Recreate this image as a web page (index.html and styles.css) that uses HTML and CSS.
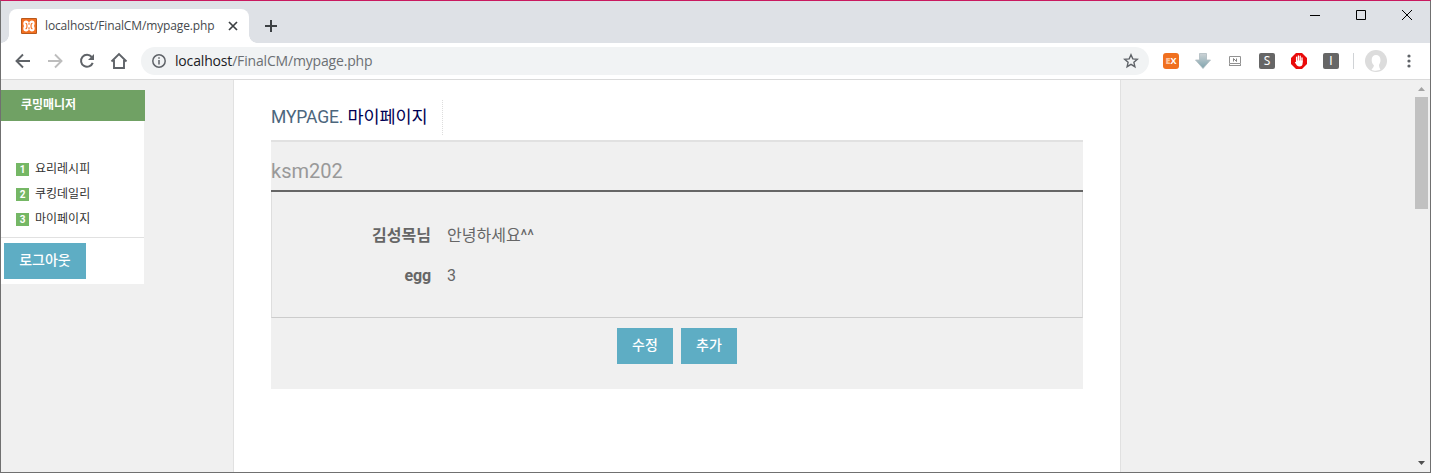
FILE: index.html
```html
<!DOCTYPE html>
<html lang="ko">
<head>
<meta charset="utf-8">
<title>localhost/FinalCM/mypage.php</title>
<link rel="stylesheet" href="styles.css">
</head>
<body>
<div class="window">
  <header class="tabstrip">
    <div class="tab">
      <svg class="favicon" width="16" height="16" viewBox="0 0 16 16"><rect width="16" height="16" rx="1" fill="#b8591b"/><rect x="1" y="1" width="14" height="14" fill="#f37021"/><path d="M5 2.500C7 2.500 7 4 8 4s1-1.500 3-1.500c2.600 0 3.400 3 2 5.500 1.400 2.500.6 5.500-2 5.500-2 0-2-1.500-3-1.500s-1 1.500-3 1.500c-2.600 0-3.400-3-2-5.500-1.400-2.500-.6-5.500 2-5.500z" fill="#fff"/><path d="M4.500 5.200c1.300 0 1.500.8 1.500 2.800s-.2 2.800-1.500 2.800M11.500 5.200C10.200 5.200 10 6 10 8s.2 2.800 1.500 2.800M8 4.500v2.200M8 9.300v2.200" fill="none" stroke="#f37021" stroke-width="1.100"/></svg>
      <span class="tab-title">localhost/FinalCM/mypage.php</span>
      <svg class="tab-close" width="10" height="10" viewBox="0 0 10 10"><path d="M1 1l8 8M9 1L1 9" stroke="#3c4043" stroke-width="1.700"/></svg>
    </div>
    <svg class="new-tab" width="14" height="14" viewBox="0 0 14 14"><path d="M7 1v12M1 7h12" stroke="#3c4043" stroke-width="2"/></svg>
    <div class="controls">
      <svg width="12" height="12" viewBox="0 0 12 12"><path d="M1 6.500h10" stroke="#000"/></svg>
      <svg width="12" height="12" viewBox="0 0 12 12"><path d="M1.500 1.500h9v9h-9z" fill="none" stroke="#000"/></svg>
      <svg width="12" height="12" viewBox="0 0 12 12"><path d="M1 1l10 10M11 1L1 11" stroke="#000"/></svg>
    </div>
  </header>
  <div class="toolbar">
    <nav class="nav">
      <svg width="16" height="16" viewBox="0 0 16 16"><path d="M15 8H2M8 1.500L1.500 8 8 14.500" fill="none" stroke="#5f6368" stroke-width="1.900"/></svg>
      <svg width="16" height="16" viewBox="0 0 16 16"><path d="M1 8h13M8 1.500L14.500 8 8 14.500" fill="none" stroke="#bdbdbd" stroke-width="1.900"/></svg>
      <svg width="16" height="16" viewBox="0 0 16 16"><path d="M13.700 9.800A6 6 0 1 1 12.700 4" fill="none" stroke="#5f6368" stroke-width="2"/><path d="M15 1v6H9z" fill="#5f6368"/></svg>
      <svg width="18" height="18" viewBox="0 0 18 18"><path d="M1.500 9.500L9 2l7.500 7.500M4 8v8h10V8" fill="none" stroke="#5f6368" stroke-width="1.900"/></svg>
    </nav>
    <div class="address">
      <svg width="16" height="16" viewBox="0 0 16 16"><circle cx="8" cy="8" r="6.200" fill="none" stroke="#5f6368" stroke-width="1.500"/><path d="M8 7v4.500M8 4.300v1.500" stroke="#5f6368" stroke-width="1.500"/></svg>
      <span class="url">localhost<span class="path">/FinalCM/mypage.php</span></span>
      <svg class="star" width="16" height="16" viewBox="0 0 16 16"><path d="M8 1.800l1.800 4.100 4.500.4-3.400 3 1 4.400L8 11.400l-3.900 2.300 1-4.400-3.400-3 4.500-.4z" fill="none" stroke="#5f6368" stroke-width="1.400"/></svg>
    </div>
    <div class="extensions">
      <span class="ext ex"><b>E</b>X</span>
      <svg width="16" height="16" viewBox="0 0 16 16"><defs><linearGradient id="steel" x2="0" y2="1"><stop stop-color="#ccd3d6"/><stop offset="1" stop-color="#7fa3ad"/></linearGradient></defs><path d="M4.500.5h7V7h4L8 15.500.5 7h4z" fill="url(#steel)" stroke="#aebbc0" stroke-width=".8"/></svg>
      <svg width="16" height="16" viewBox="0 0 16 16"><path d="M2.500 3.500h11v7h-11zM2 12.500h12M2.500 11v2M13.500 11v2" fill="none" stroke="#929292"/><path d="M6.500 8.500v-3l3 3v-3" fill="none" stroke="#777" stroke-width=".9"/></svg>
      <span class="ext letter">S</span>
      <svg width="16" height="16" viewBox="0 0 16 16"><path d="M5 0h6l5 5v6l-5 5H5l-5-5V5z" fill="#e90b0b"/><path d="M5.600 8V4.200M7.400 8V2.900M9.200 8V3.200M11 9V5" stroke="#fff" stroke-width="1.300" stroke-linecap="round"/><path d="M5 7.500h6.600v3c0 1.800-1.200 3-3.100 3-2 0-3.200-1.400-4.700-4.200l1.200-.5z" fill="#fff"/></svg>
      <span class="ext letter bar">I</span>
    </div>
    <i class="divider"></i>
    <svg class="avatar" width="22" height="22" viewBox="0 0 22 22"><circle cx="11" cy="11" r="11" fill="#dcdcdc"/><path d="M6.700 10C6.700 6.500 8.500 5 11 5s4.500 1.700 4.500 5c0 2.500-1 3.700-1.500 5 0 2 .7 3 1.500 4.500-2 1.500-7 1.500-9 .2 1.200-1.700 2.400-2.500 2.400-4.500-1.500-1.300-2.200-3-2.200-5.200z" fill="#fff"/></svg>
    <svg class="menu" width="4" height="14" viewBox="0 0 4 14"><g fill="#5f6368"><circle cx="2" cy="2" r="1.600"/><circle cx="2" cy="7" r="1.600"/><circle cx="2" cy="12" r="1.600"/></g></svg>
  </div>
  <div class="viewport">
    <aside class="sidebar">
      <h2 class="brand">쿠밍매니저</h2>
      <ol class="links">
        <li><span class="num">1</span>요리레시피</li>
        <li><span class="num">2</span>쿠킹데일리</li>
        <li><span class="num">3</span>마이페이지</li>
      </ol>
      <div class="logout"><button class="btn wide">로그아웃</button></div>
    </aside>
    <main class="page">
      <h1 class="title"><span>MYPAGE. <b>마이페이지</b></span></h1>
      <section class="panel">
        <h3 class="user">ksm202</h3>
        <dl class="info">
          <dt>김성목님</dt><dd>안녕하세요^^</dd>
          <dt class="latin">egg</dt><dd class="latin">3</dd>
        </dl>
        <div class="actions"><button class="btn">수정</button><button class="btn">추가</button></div>
      </section>
    </main>
    <div class="scrollbar">
      <svg width="15" height="17" viewBox="0 0 15 17"><path d="M4 11h7L7.500 7z" fill="#a3a3a3"/></svg>
      <i class="thumb"></i>
      <svg class="down" width="15" height="17" viewBox="0 0 15 17"><path d="M4 6h7l-3.500 4z" fill="#505050"/></svg>
    </div>
  </div>
</div>
</body>
</html>
```
FILE: styles.css
```css
* { box-sizing: border-box; }
body { margin: 0; font-family: Roboto, "Noto Sans CJK KR", sans-serif; }
svg { display: block; flex: none; }
h1, h2, h3, ol, dl, dd { margin: 0; padding: 0; }

.window {
  width: 1431px; height: 473px; overflow: hidden;
  display: flex; flex-direction: column;
  border: 1px solid #707070; border-top-color: #c9195f;
  background: #fff;
}
.tabstrip { height: 42px; flex: none; display: flex; background: #dee1e6; padding-left: 8px; }
.tab {
  position: relative; width: 240px; height: 34px; margin-top: 8px; padding: 0 11px 0 12px;
  display: flex; align-items: center;
  background: #fff; border-radius: 8px 8px 0 0;
}
.tab::before, .tab::after { content: ""; position: absolute; bottom: 0; width: 8px; height: 8px; }
.tab::before { left: -8px; background: radial-gradient(circle at 0 0, transparent 7.5px, #fff 8px); }
.tab::after { right: -8px; background: radial-gradient(circle at 100% 0, transparent 7.5px, #fff 8px); }
.tab-title { margin-left: 8px; font: 12px/16px "Open Sans", sans-serif; letter-spacing: -0.14px; color: #45494d; white-space: nowrap; }
.tab-close { margin-left: auto; }
.new-tab { margin: 18px 0 0 15px; }
.controls { margin: 8px 17px 0 auto; display: flex; gap: 34px; }

.toolbar { height: 37px; flex: none; display: flex; align-items: center; border-bottom: 1px solid #dadada; }
.nav { display: flex; align-items: center; gap: 16px; padding: 0 13px 0 14px; }
.nav svg:last-child { margin-left: -1px; }
.address { width: 1008px; height: 28px; display: flex; align-items: center; padding: 0 10px; border-radius: 14px; background: #f1f3f4; }
.url { margin-left: 8px; font: 14px/20px "Open Sans", sans-serif; letter-spacing: -0.17px; color: #202124; white-space: nowrap; }
.path { color: #6b6f73; }
.star { margin-left: auto; }
.extensions { display: flex; gap: 16px; margin-left: 14px; }
.ext { width: 16px; height: 16px; border-radius: 2px; color: #fff; text-align: center; }
.ex { border-radius: 3px; background: #f0701f; font: bold 9px/16px "Open Sans", sans-serif; }
.ex b { color: #ffc39a; }
.letter { background: #666; font: 12px/16px "Noto Sans", sans-serif; }
.bar { font-family: Roboto, sans-serif; }
.divider { width: 1px; height: 16px; margin: 0 11px 0 14px; background: #d0d3d6; }
.menu { margin-left: 20px; }

.viewport { flex: 1; min-height: 0; display: flex; align-items: flex-start; background: #f0f0f0; }
.sidebar { width: 143px; height: 194px; margin-top: 10px; flex: none; background: #fff; }
.sidebar .brand { width: 144px; height: 31px; padding-left: 20px; background: #70a164; color: #fff; font-size: 12px; line-height: 31px; letter-spacing: -0.04px; }
.links { list-style: none; padding: 36px 0 0 15px; height: 117px; border-bottom: 1px solid #e1e1e1; font-size: 12px; color: #333; }
.links li { height: 25px; display: flex; align-items: center; line-height: 25px; }
.num { width: 13px; height: 13px; margin: 0 6px 0 0; background: #75b765; color: #fff; font: bold 10px/13px Roboto, sans-serif; text-align: center; }
.logout { padding: 5px 3px; }
.btn {
  display: block; width: 56px; height: 36px; padding: 0 0 1px; border: 0; border-radius: 0;
  background: #5eadc4; color: #fff; font: 500 14px/35px Roboto, "Noto Sans CJK KR", sans-serif;
}
.wide { width: 82px; }
.page { width: 888px; height: 392px; margin-left: 89px; padding: 20px 37px 0; background: #fff; border: solid #e1e1e1; border-width: 0 1px; }
.title { height: 40px; font-size: 17.500px; line-height: 34px; font-weight: 400; color: #4c667d; }
.title span { display: block; width: 172px; height: 35px; border-right: 1px dotted #ddd; white-space: nowrap; letter-spacing: -0.13px; }
.title b { font-weight: 400; color: #000054; }
.panel { height: 249px; background: #f0f0f0; border-top: 2px solid #e1e1e1; }
.user { height: 50px; border-bottom: 2px solid #666; color: #999; font-size: 20px; font-weight: 400; line-height: 58px; }
.info {
  height: 126px; padding: 23px 0 0; display: grid; grid-template-columns: 159px 1fr;
  column-gap: 16px; grid-auto-rows: 40px; align-content: start;
  border: 1px solid #dedede; border-top: 0; border-bottom-color: #ccc;
  color: #666; font-size: 16px; line-height: 41px;
}
.info dt { text-align: right; font-weight: 700; }
.info dt.latin { letter-spacing: -0.1px; }
.actions { display: flex; justify-content: center; gap: 8px; padding-top: 10px; }
.scrollbar { width: 16px; height: 392px; margin-left: auto; display: flex; flex-direction: column; }
.thumb { width: 13px; height: 112px; margin-left: 1px; background: #c1c1c1; }
.down { margin-top: auto; }
```
